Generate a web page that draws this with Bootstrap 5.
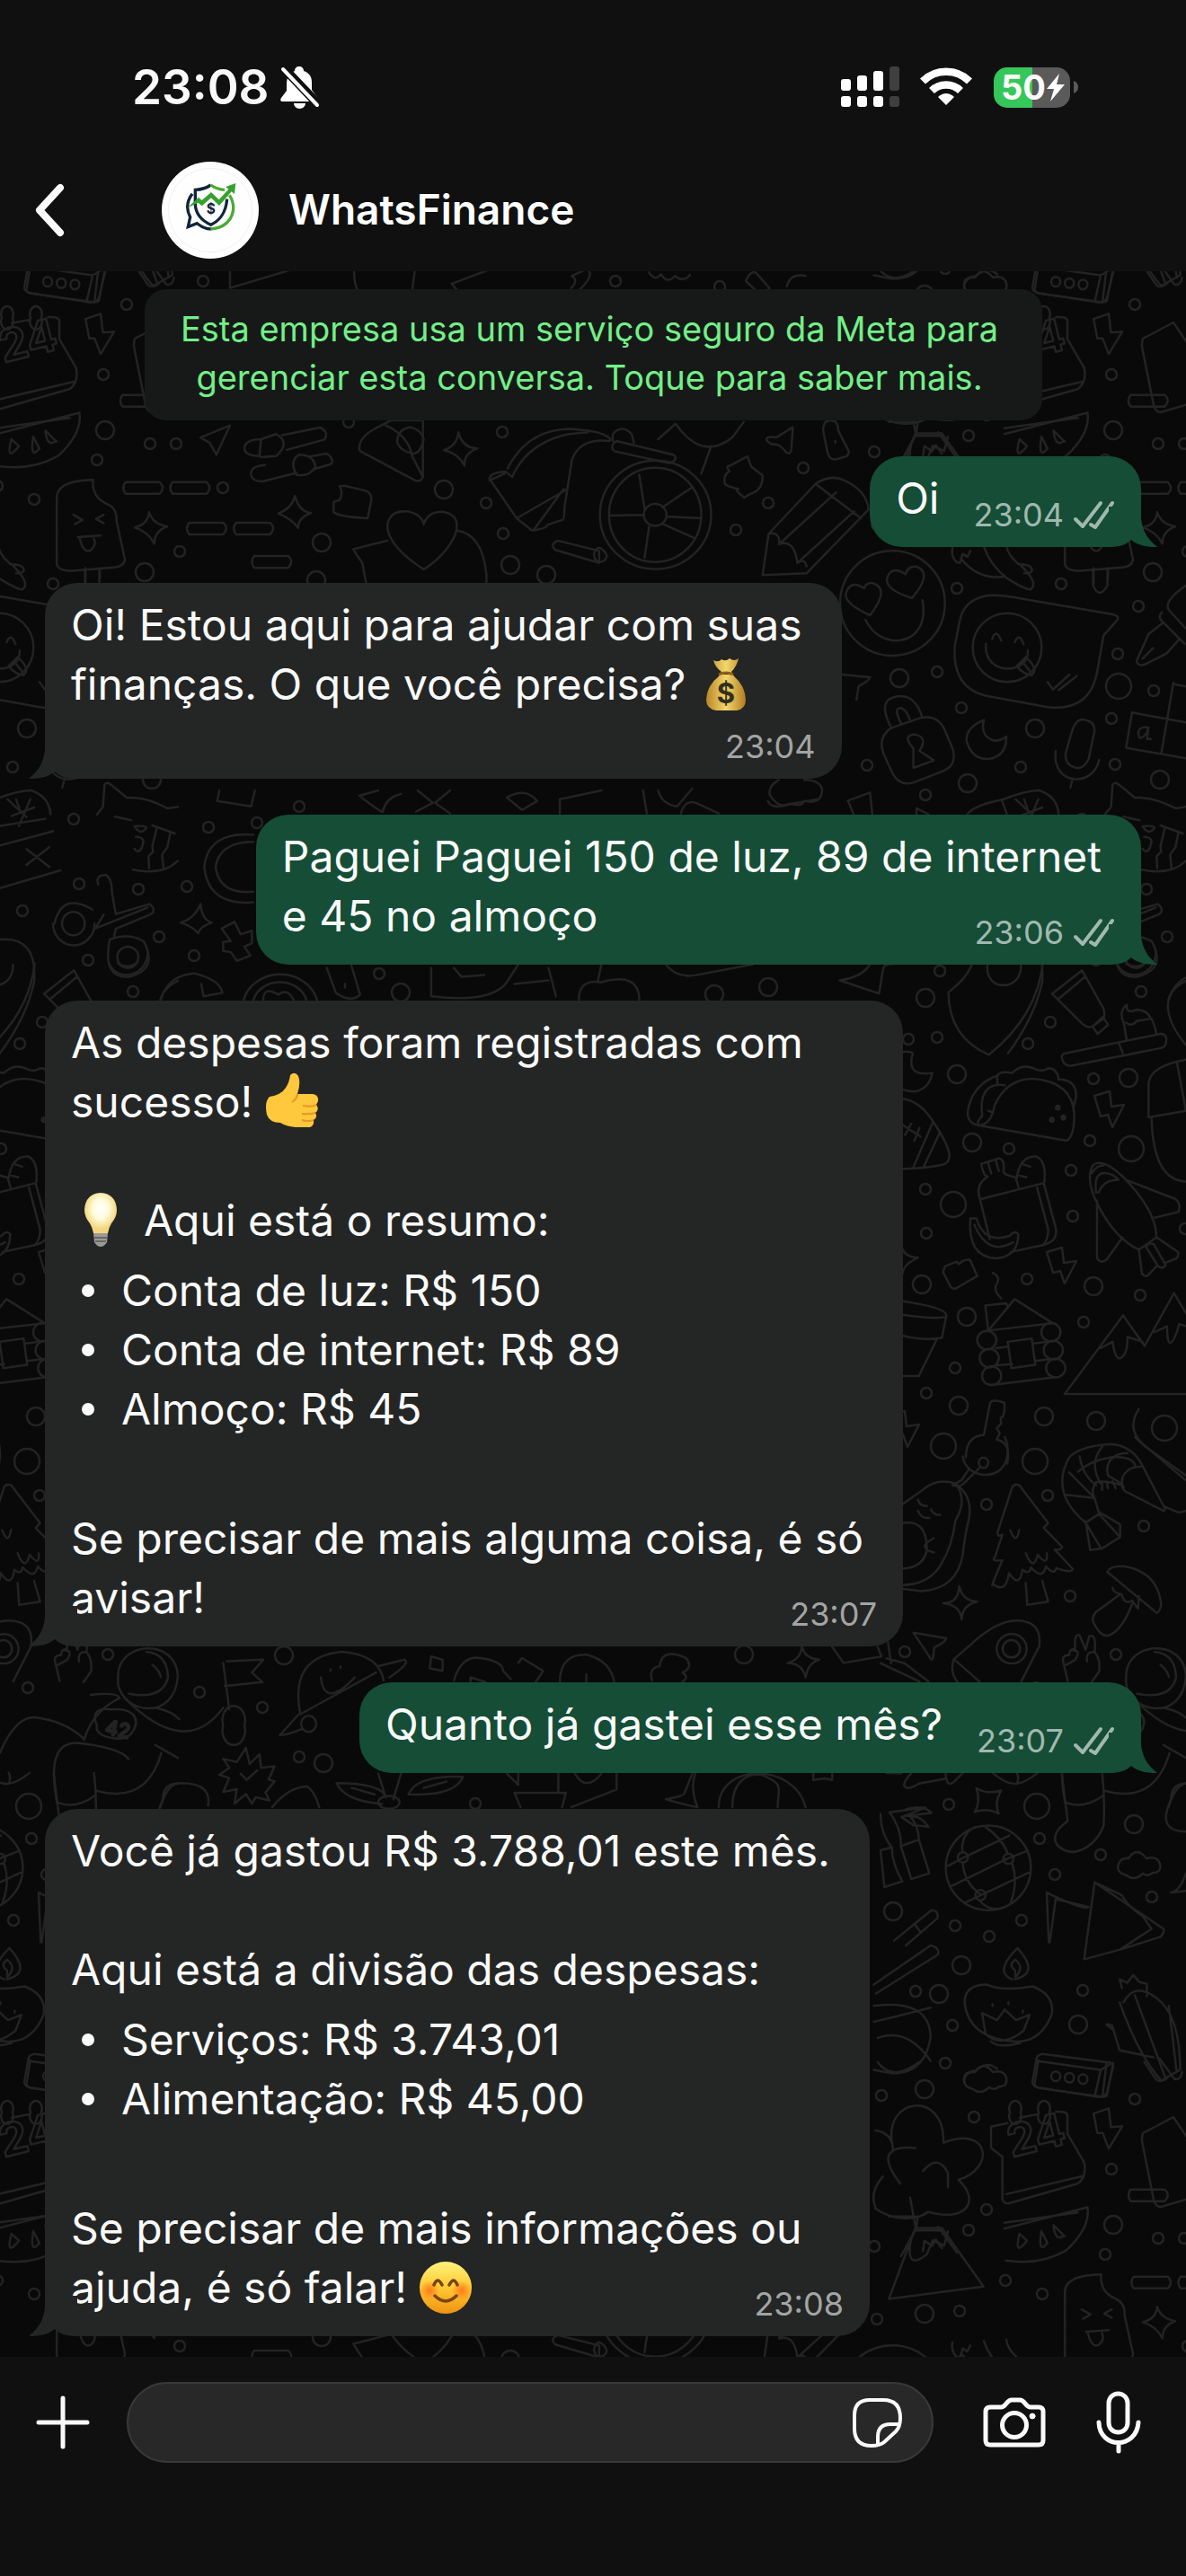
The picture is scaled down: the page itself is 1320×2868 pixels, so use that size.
<!DOCTYPE html>
<html lang="pt-BR" data-bs-theme="dark">
<head>
<meta charset="utf-8">
<meta name="viewport" content="width=device-width, initial-scale=1">
<title>WhatsFinance</title>
<link href="https://cdn.jsdelivr.net/npm/bootstrap@5.3.0/dist/css/bootstrap.min.css" rel="stylesheet">
<style>
:root{--bar:#101010;--wall:#090909;--incoming:#242625;--outgoing:#154d37}
body{font-family:Inter,"Noto Sans",sans-serif;background:var(--bar);color:#fafafa;font-size:48px;line-height:66px}
svg{display:block;flex:none}
.status-row{height:160px;padding:34px 120px 0 147px}
.clock-group{gap:12px}
.clock{font-size:53px;font-weight:600;line-height:60px}
.battery{width:85px;height:45px;border-radius:15px;font-size:38px;font-weight:700;line-height:45px;background:linear-gradient(90deg,#35c759 50%,#5a5a5a 50%);padding-left:8px}
.title-row{height:142px;padding:6px 40px 0 38px}
.avatar{margin-left:106px}
.contact{font-size:46px;font-weight:600;margin-left:33px}
.chat-area{background:var(--wall);padding:20px 50px 23px}
.wallpaper{left:0;top:0;width:100%;height:100%}
.wallpaper *{vector-effect:non-scaling-stroke}
.thread{gap:40px}
.notice{max-width:999px;border-radius:24px;background:#171918;color:#73ef88;font-size:38px;line-height:54px;padding:17px 24px 21px 16px}
.notice a{color:inherit}
.bubble{border-radius:36px;padding:14px 44px 21px 29px}
.bubble.in{background:var(--incoming)}
.bubble.out{background:var(--outgoing)}
.tail{bottom:0;width:54px;height:45px}
.in .tail{left:-18px;fill:var(--incoming)}
.out .tail{right:-18px;fill:var(--outgoing)}
.last-line{gap:38px}
.stamp{font-size:36px;line-height:36px;margin:0 -15px -3px 0;gap:10px;color:#a3a5a4}
.out .stamp{color:#a1b8af}
.stamp-row{height:51px}
.items{list-style:none;margin:12px 0;padding:0}
.items li{display:flex;align-items:center;gap:30px;padding-left:12px}
.items li::before{content:"";width:14px;height:14px;border-radius:50%;background:#fafafa}
.emoji{display:inline-block;vertical-align:-12px}
.emoji-lead{margin:0 29px 0 14px}
.composer{height:244px;padding:28px 50px 0 38px}
.field-wrap{height:90px;border-radius:45px;background:#282828;border:2px solid #393939;padding:0 33px 0 30px;margin:0 55px 0 39px}
.field-wrap input{background:none;border:0;outline:0;color:inherit;min-width:0}
.plain-btn{background:none;border:0;padding:0;color:#fafafa}
.mic-btn{margin-left:56px}
.line-icon{fill:none;stroke:#fafafa;stroke-width:5;stroke-linecap:round;stroke-linejoin:round}
.thin-icon{stroke-width:4}
</style>
<script src="https://cdn.jsdelivr.net/npm/bootstrap@5.3.0/dist/js/bootstrap.bundle.min.js"></script>
</head>
<body>
<header>
  <div class="status-row d-flex align-items-center justify-content-between">
    <div class="clock-group d-flex align-items-center">
      <span class="clock">23:08</span>
      <svg width="44" height="48" viewBox="0 0 44 48"><path fill="#fff" d="M21 1c-3 0-5 2-5 5-6 2-9 8-9 14v8L1 36c-2 3 0 4 2 4h36l3-1c1-2 0-3-2-5l-5-7V19C35 12 32 8 26 6c0-3-2-5-5-5zM15 42h13c0 3-3 6-6.500 6s-6.500-3-6.500-6z"/><path stroke="#101010" stroke-width="10" d="M3 2 42 43"/><path stroke="#fff" stroke-width="4" stroke-linecap="round" d="M3 4 41 44"/></svg>
    </div>
    <div class="d-flex align-items-center">
      <svg width="68" height="46" viewBox="0 0 68 46" fill="#fff"><rect y="14" width="11" height="13" rx="3"/><rect x="18" y="10" width="11" height="17" rx="3"/><rect x="36" y="5" width="11" height="22" rx="3"/><rect x="54" width="11" height="27" rx="3" fill="#3f3f3f"/><rect y="33" width="11" height="12" rx="3"/><rect x="18" y="33" width="11" height="12" rx="3"/><rect x="36" y="33" width="11" height="12" rx="3"/><rect x="54" y="33" width="11" height="12" rx="3" fill="#3f3f3f"/></svg>
      <svg class="ms-3 me-3" width="66" height="46" viewBox="0 0 66 46"><g fill="none" stroke="#fff" stroke-width="8.500"><path d="M7 16.500a37 37 0 0 1 52 0"/><path d="M17 27a23 23 0 0 1 32 0"/></g><path fill="#fff" d="M33 43 24 34q9-8 18 0z"/></svg>
      <div class="battery d-flex align-items-center ms-1"><span>50</span><svg width="22" height="31" viewBox="0 0 22 31"><path fill="#fff" d="M15 0 1 17h8L5 31 21 12h-9z"/></svg></div>
      <svg class="ms-1" width="5" height="14" viewBox="0 0 5 14"><path fill="#5a5a5a" d="M0 0q5 2 5 7t-5 7z"/></svg>
    </div>
  </div>
  <div class="title-row d-flex align-items-center">
    <button class="plain-btn" aria-label="Voltar"><svg width="36" height="60" viewBox="0 0 36 60"><path d="M29 5 6 30l23 25" fill="none" stroke="#fafafa" stroke-width="8" stroke-linecap="round" stroke-linejoin="round"/></svg></button>
    <svg class="avatar" width="108" height="108" viewBox="66 30 324 324"><circle cx="228" cy="192" r="162" fill="#fefefe"/><circle cx="228" cy="192" r="140" fill="none" stroke="#f1f1f1" stroke-width="3"/><g fill="none" stroke-width="10"><path stroke="#10243a" d="M230 108q-22 15-52 16v50c2 30 22 53 52 67 30-15 50-38 54-86"/><path stroke="#4aab35" d="M230 108q20 15 46 16M292 142c26 35 17 105-62 113"/><path stroke="#10243a" d="M168 137q-28 38-7 78l-7 33 30-12q22 18 46 19"/></g><path fill="#35a12f" d="m152 184 37-35 11 10 31-27 26 25 32-35-9-8 33-12-4 36-10-8-41 47-27-26-31 27-12-11z"/><text x="230" y="203" text-anchor="middle" font-size="46" font-weight="700" fill="#10243a">$</text></svg>
    <h1 class="contact mb-0">WhatsFinance</h1>
  </div>
</header>

<main class="chat-area position-relative overflow-hidden">
  <svg class="wallpaper position-absolute" aria-hidden="true">
    <defs>
      <path id="bolt" d="m0 6 17-5 2 17 14-2-13 25-5-14-8 2z"/>
      <path id="cloud" d="M11 28q-13-4-9-13 3-7 11-6 9-14 20 0 12-3 15 6 2 10-8 10-5 5-11 1-10 9-18 2z"/>
      <g id="tile">
        <g id="dots"></g>
        <!-- keyboard, calendar, melon, lolly and rucksack -->
        <g transform="translate(0 290) scale(.842 .3827)">
          <path d="M40 15 35 85q0 9 8 12l80 24q8 2 8-8l8-90M125 118l5-95M180 20l16 52q6 10 14-5M200 10l20 60q8 4 10-20M304 15v65L388 25M469 0q-3 50 3 85M550 0l-5 85M597 68l60-50M597 68l10 25M755 80q10-20 1-35l20-20q12 20-15 70M858 35q8 28 16 5 8 30 18 5 12 20 20-3M986 60q5-30 13-25l18 45q-6 20-12 20zM1040 75q5-40 25-30M1160 20q20 60 55 0M1275 80q-5-30 15-35 15-30 28-5"/>
          <path d="M57 62a6 14 0 1 0 12 0a6 14 0 1 0-12 0M75 66a6 14 0 1 0 12 0a6 14 0 1 0-12 0M93 70a6 14 0 1 0 12 0a6 14 0 1 0-12 0"/>
          <path d="M113 170l20-15 3 55 15-3-18 65-8-45h-7zM-5 505 105 443q4 60-28 125-35 45-80 30M-5 488l97-30M15 520q-8 70 10 20zM44 512q-5 70 8 35zM60 495q18 40 14 30-12 20-14-30"/>
          <path d="M75 690q0-50 48-52-2 50 18 70 14 12 13 50l11 110q0 22-15 25l-55 10q-18 0-20-20zM113 895v45M132 895v30M103 805l30-5M105 805q5 50 15 38 8-15 4-35M97 740l12 15-10 12M137 740l-10 12 10 12"/>
          <path d="M166 645h45q8 15 0 34h-45q-6-17 0-34zM228 645h45q8 15 0 34h-45q-6-17 0-34zM250 763h45q8 15 0 34h-45q-6-17 0-34zM312 763h45q8 15 0 34h-45q-6-17 0-34zM336 860h45q8 15 0 34h-45q-6-17 0-34zM162 391h45q8 15 0 34h-45q-6-17 0-34z"/>
          <path d="M265 515l39-35-18 85-9-35zM345 520q-20 0-22 25 0 24 20 24zM345 520l20-15q20 25 0 64l-20 3M373 508l50-22q12 12 6 35l-50 30M350 595q-20 3-18 30 2 18 15 18l45-25M395 565q20 0 22 35-8 30-25 24-10-40 3-59M410 570l22-8q10 15 6 30l-22 15M475 545q0-30 20-55l22-25h42v165q-3 18-12 8l-68-80q-5-5-4-13zM510 480q30 30 35 90l14 60M525 530q0-40 18-45 15 10 17 35-5 50-17 40-13-5-18-30"/>
          <path d="M606 500q5 45 25 47-18 13-17 50-8-35-27-45 18-15 19-52zM390 685q5 45 21 50-17 13-17 43-8-25-26-42 18-15 22-51zM197 732q5 35 24 42-17 13-17 50-8-35-26-47 18-10 19-45zM455 655l28 15q8 5 8 25l-5 55q-40-5-45-18v-30l8-5q5-20 0-40z"/>
          <path d="M512 770q3-45 28-40 18 10 20 38 5-37 25-37 25 8 17 65-12 60-42 103-48-70-48-129zM512 815l-45 25q5 20 12 40l5 60M603 785q35 10 40 130v25M671 605q25-110 80-115 40 5 50 20 10 12 3 15M677 630q20-100 75-125l25-5M677 630l-8-15q-20 0-22 20l36 115 67-85M647 640l20-20M683 750l20 35q20-5 20-15l20-15q3 0 3-35l10-140q10-65 50-55M705 785l40-120M810 525v-20q12-30 25 0l3 25M815 525l75 40q8 12-5 25l-73-35q-7-15 3-30M737 815l55 30v35l-58-38q-8-15 3-27zM800 850q-10-30-15 5 2 30 12 20 8-10 3-25"/>
          <path d="M805 740a60 135 0 1 0 122 0a60 135 0 1 0-122 0zM793 740a73 157 0 1 0 147 0a73 157 0 1 0-147 0zM851 740a15 32 0 1 0 30 0a15 32 0 1 0-30 0M805 742l45-2M852 722l-7-98M876 718l38-57M882 745l44 5M875 765l43 43M858 775l-6 90M870 520l23-45q35 110 75 40l15-45M940 540l-13 80"/>
          <path d="M988 570l5 30 15 25q0 40-12 50-10 10-12 15-15-25-8-25-20-10-18-20-2-20 6-32-5-15 0-15zM1014 525q-4-15 12-10l22-30-2 65q-2 20-8 5-8-25-18-20zM1088 495q0-30 10-30t10 30l14 60q0 15-8 18l-10 6q-8 0-10-20zM1104 525v5M1008 915l8-120 62-145q20-30 38-10 30 30 32 85l-82 185zM1016 795q15-8 14 30M1030 825q20-15 24 55M1054 880q10-15 12 10M1078 650l60 100M1030 825l75-150M1054 880l75-150M1175 470l38 0-2 35-20 80M1240 500l25 75M1210 510h35M1220 570l2-30 10 15 5-18 8 25"/>
        </g>
        <!-- faces, speech bubble, lock, pen and board -->
        <g transform="translate(860 560) scale(.3333)">
          <path d="M225 335a175 175 0 1 0 350 0a175 175 0 1 0-350 0M325 375q-90-40-80-75 15-45 60-15 10-25 35-15 50 20-15 105zM465 318q-95-30-82-70 15-40 60-10 10-30 38-25 55 20-16 105zM310 390c50 110 220 90 190-65M600 150c-5 30 10 50 25 50l10-30 15 10 10-20M632 190q60 70 145 55M705 145q20 60 75 105 80 50 85 35 20-20-35-75-45-30-50-70M820 205q40 0 45 15t-25 15"/>
          <path d="M705 312q35-10 130 8l300 52q25 5 15 20l-45 50-22 125q-25 130-165 115l-190-35q-130-20-120-170l18-90q15-60 79-75M668 483a115 115 0 1 0 230 0a115 115 0 1 0-230 0M712 470c-10 110 145 105 140 22M733 455q12-40 30 5M808 465q15-35 30 7M815 545l30-30q45 40 20 60-25 0-50-30M833 530l25 30M918 598l18 25 55-50M955 625l60-47M1070 225v50q20 50 48 0v-55"/>
          <path d="M395 750q-40-80 0-98 75-30 105 65M430 740q-30-60 0-55 20 10 30 45M395 752l95-33q60-15 85 40l25 60q20 60-40 80l-85 33q-55 20-80-40l-25-55q-20-55 25-85M470 885v-65q-40-45 5-47 45 10 15 55l48 32zM705 725q-60 25-58 70 20 65 75 60 60-10 58-75-35 25-60 5-25-20-15-60M1000 760q15-45 45-35 30 5 30 35l-20 95q-20 40-50 27-30-10-27-45zM945 828c-15 115 125 125 145 30M1002 920l-8 30M230 573l95 9q0 10-38 30l-7 45"/>
          <path d="M1380 275q-80 55-55 85l55 60M1300 365q-15 15 0 30l75 75M1300 403l-45 35-40 90q5 20 30 10l70-35 40-45M1235 520l35-35M1338 600l-40 235M1200 700l180 33M1200 700l-20 118 200 35M1338 605l42 8M1255 750q-45-5-30 35 20 0 30-35l-5 38h12"/>
          <path d="M1110 1040l20-25 5-75q10-10 20 0l55 45q60-5 135 35l35-5M1170 1048l55 12M1295 1077l75 27M1310 1085l-15 60 2 20-15 15 2 40M1355 1100l-10 50-18 25 5 45M1230 1225q100 20 150-30M1235 1080q60-5 30 15-15 10-30-15M1240 1115q35 0 20 35-10 25-25 5M250 995l75-28 8 75M252 995l18 45M480 1040v-20l40 20M650 1040q20-30 120-50 75-30 120-30 60 20 65 80M765 992l18 50M840 990l15 45M825 1045l75-28M20 925q-35 20-30 50 30 50 70 30 40 10 45-10 60 15 60-40-10-30-60-30"/>
        </g>
        <!-- guitar pick, toothpaste, taco, bag, shuttle, cabin and peaks -->
        <g transform="translate(980 1060) scale(.3333 .3571)">
          <path d="M305 40q-20 45-78 85 0 140 135 195 160-120 180-285M357 40c-10 85 115 85 112 0M573 130l100-73 72 120q5 20 0 30l-37 25q-15 5-30-5zM593 147l90-70M708 232l35-30 17 25-35 28zM790 35c20 55 125 50 130-35M820 35q30 20 60 0M605 325q5-10 15-10l315-60q25 0 18 30-3 12-20 15l-300 55q-25-2-28-30zM797 287l12 28M822 275l-10-55q-18-35 10-55 0 30 30 15 40 0 50 27 10 5 20 50M820 220q20 15 35-5l50-8"/>
          <path d="M325 540q-45-10-30-60 20-70 95-95 10-15 50-8 30-30 70-15 30 15 50 0 30 0 35 35 60 0 58 55l-8 30M325 540q-5-10 15-30-10-60 20-85 20-15 55-10M325 540q45 0 55-60 40-85 130-85 130 10 137 110 0 70-25 83zM390 385v25M360 495l15 5M65 315q25-10 43 0-25 75 65 62-10 50-60 58-30 0-50-12M65 457q60 0 110 70 50 70 55 105 0 25-20 30-80 15-145 13M175 530l-65 140M197 565l-53 105M68 535l65 40M68 520v25M102 535l-20 35M130 548l-17 40"/>
          <path fill="#212121" d="M586 485a6 6 0 1 0 12 0a6 6 0 1 0-12 0M566 523a6 6 0 1 0 12 0a6 6 0 1 0-12 0M605 516a6 6 0 1 0 12 0a6 6 0 1 0-12 0"/>
          <path d="M365 895l-37-140q-5-35 30-55l-10-5q-10-20-12-35l60-17q20 5 15 40-5 10 40 20l10 30M335 770l210-50 40 140q10 45-50 55l-100 20M520 725l40 140q0 35-20 50M455 705q10-70 65-68 35 15 27 80M465 697l22 5M478 662l22 7M358 655l12 35M385 650l10 32M300 830h20q25 80 110 55 20-20 30-5 0 70-75 75-95-5-85-125M313 850q45 100 130 55"/>
          <path d="M727 790q-45-80-18-125 30-25 100 35 115 110 112 190l-58 38q-80-35-136-138zM720 750q-10-70 40-60 20 5 35 20-50 0-67 40M705 690q15-25 40-25M820 710l165 60q20 15 10 40l-88 20M723 775v180q15 20 35 0l50-65M863 928l10 75q15 15 25 0l25-25M923 890l70 45q5 10-5 20l-40 15M887 920l40 60q20 10 25-5l-40-65q-20-5-25 10"/>
          <path d="M215 980l40-15 5 8 15-10q25-10 28 5l20 42-70 38q-15 5-22-10l-22-40zM375 1000q30 15 10 40-5 20 18 40M350 1102l70-7 5 12M350 1102l10 80M360 1180l88-98 127 75zM425 1215l80-10 12 82-80 10zM510 1220l45-5M385 1235l42-5M390 1288l50-3M515 1275l45-5M370 1350l215-25"/>
          <path d="M323 1210a32 29 0 1 0 64 0a32 29 0 1 0-64 0M331 1266a32 29 0 1 0 64 0a32 29 0 1 0-64 0M339 1321a32 29 0 1 0 64 0a32 29 0 1 0-64 0M537 1185a32 29 0 1 0 64 0a32 29 0 1 0-64 0M545 1241a32 29 0 1 0 64 0a32 29 0 1 0-64 0M553 1297a32 29 0 1 0 64 0a32 29 0 1 0-64 0"/>
          <path d="M615 1378l195-245 72 95 98-165 60 95M615 1378h420M735 1235l40-20q10 70 35 45 15-15 15-60l50 15M915 1185l42-18q0 80 25 35 10-20 15-42l40 10M70 1088q150 20 150 45l-15 70q-60 10-135-8M70 1130q100 15 150 8M188 1207l-60 115h-58M70 915q5 35 55 38-50 20-52 52M1020 335q-120 20-125 75v105l125-20M905 515q5 210 130 200M990 345l30 150M1020 90c-90 40-70 120 0 200"/>
          <path d="M345 1505l20-95q3-20 48-5 5 20-5 45-10-5-5 20l-15 15 10 15-10 20q50 10 35 75M345 1505q-60 5-60 70M862 1425q-40 60 10 105l145 115M850 1600q-10-30-80-25-70 10-110 45"/>
        </g>
        <!-- avocado, fir tree, prawn, mushroom, rocket, astronaut and globe -->
        <g transform="translate(980 1600) scale(.3333 .3571)">
          <path d="M275 60c5 70 150 90 150-20q0-20-10-40M328 80a16 16 0 1 0 32 0a16 16 0 1 0-32 0M335 92l-60 55q-10 10-35 3l30-15 25-35M65 215l75-50q50-40 110-20 60 40 45 110-15 60-20 110-20 110-140 115l-70-8M255 150q35 50-5 110-10 80-50 140-40 60-130 62M65 270q90-20 90 80-10 60-90 60M125 195q5 20 30 20M125 230q10 25 38 22M168 225q10 20 32 17M178 315q-60 30 0 45"/>
          <path d="M455 148q10 0 15 10l90 110-15 15 62 60q-5 10-25 8l60 60q-5 15-55-3-5 25-35-5-10 45-50 3-5 25-28 8-10 60-45 10-10 65-52 35-15 20 30-75-40 5-25-10l25-70q-20 10-15-10l45-130q3-15 18-16M433 290q20 50 30 0M485 362q25 60 40 5 35 40 30-5M485 455l5 68 70-10-20-65"/>
          <path d="M715 190q-15-20 5-50 35-5 85 10 5 20 25 25l115 55q10-5 0-15l-70-125q-35-65-110-68-130 10-145 60-45 100 65 185l45-28zM685 262l15 90 40-5 60-35v-40l-70-38M730 240l68 70M690 275l45 70M665 60q10 60 55 90M630 110l85 80M620 180l92 10M740 30q-45 50-5 115M825 50c-60 0-75 40-65 70l45 25M872 92c-60 0-75 40-60 65M850 0l35 30 135 90M945 215l50 20 25-5M740 140v25M755 140l5 20M775 138l10 22"/>
          <path d="M757 420q10-20 60-17 110 20 120 120-5 25-15 25zM800 490l-80 55q-20 20-5 40 25 45 55 30 40-20 70-95M775 470q0 15 30 20 10 35 35 20l20 25 3-40M210 518q50 0 53-53 10 45 60 48-50 10-52 55-5-45-61-50M110 610l110 17q-5 15-40 28l-5 35q-5 10-15-10zM330 762l-85-70 50-40q90-80 160-80 85 0 75 80l-60 110M245 692q-15 40 12 72M388 660a50 46 0 1 0 100 0a50 46 0 1 0-100 0M408 660a29 27 0 1 0 58 0a29 27 0 1 0-58 0M0 705l130 57M35 705l-10-65M20 690l60 15 80 57"/>
          <path d="M625 760l-15-60q-5-20 20-20 0-20 20-20-5-50 15-42l20 45 12-42q25-10 18 50 20 20 15 60l-25 33M645 665q25 0 5 30l-30 15M690 700q-5-30 20-30M820 745c0-110 195-120 200 0-10 140-180 120-200 25zM915 670q70 5 72 80-20 70-130 50M935 710q25 20 28 38M875 870l5 20-5 20M950 845q50 10 75 35M945 960l75 40M965 985q-50 160-215 118M20 1048h50M78 1085q5-20 25-37M78 1085q10 20 50-5l90-15v-18M220 1065q5 25 25 10l30-28M375 1047c60 50 95 40 150 0M455 1047q8 10 2 30"/>
          <path d="M605 1047l20 150q-60 40-35 75 50 45 115-5 25-20 40-55 5-90-5-165M615 1138q60 25 128-20M320 1095q40 20 83 7-25 40-8 72-40-20-80-5 20-35 5-74zM30 1170l120-15-80 30 40 25M30 1170q40 50 38 105l35 103 60-18-35-105q0-40-30-75M68 1275l60-20M85 1160q60-15 85 12-50 5-85 10M100 1185q30-10 60 30l-50-5M0 1175q0 60 38 105 0 50 35 105l-60 18-13-115 35-8"/>
          <path d="M218 1343a142 132 0 1 0 284 0a142 132 0 1 0-284 0M225 1337l50-25 155-70M237 1400l185-85 68-25M285 1450l210-92M275 1295c-10-40 20-75 45-80M275 1330q5 60 58 95M350 1215q60 40 75 85M440 1330q20 60-5 120M330 1445q30 30 60 25M258 1310a17 16 0 1 0 34 0a17 16 0 1 0-34 0M410 1315a17 16 0 1 0 34 0a17 16 0 1 0-34 0M317 1428a17 16 0 1 0 34 0a17 16 0 1 0-34 0"/>
          <path d="M555 1420q120 55 140 45l-110-25-20 135M555 1425l7 150M715 1388l-35 240 120-30 105-65-30-40q-45-25-70-65zM715 1388l230 145q5 10-10 25l-135 40M1020 1080q-50 0-50 50-50 100 50 100M970 1420q30-5 50-60M970 1420l50-5M45 1570l125-95q25 0 20 25l-105 85M115 1520l20 25"/>
        </g>
        <!-- scissors, tennis ball, sparkle and fruit -->
        <g transform="translate(0 880) scale(.842 .3954)">
          <path d="M0 100l60-20M10 25l25 50M40 25l-15 75M35 165l30 50M65 160l-30 50M0 155l70-40M0 275l80-50M130 265q-5-25 10-27 8 10 8 50l5 60 45-28q10 20 0 30l-45 40-2 20M137 350l-10 35M70 375a27 60 0 1 0 55 0M82 375a15 33 0 1 0 30 0a15 33 0 1 0-30 0M72 375q10-90 50-40M125 390l70-60M145 420q-10 110 25 105 40-20 20-100-20-25-45-5M155 470a14 30 0 1 0 28 0a14 30 0 1 0-28 0M265 320q2 45 15 52-15 10-18 30-8-20-23-30 18-10 26-52M310 370l8 35 15-10v35l-10 10 8 25-18 15-8-25-10-3v-25l10-3-12-35zM335 125q-60-10-65 90 5 110 65 100M335 145q-45 0-50 70 5 80 50 70M0 420q50-10 45 120-10 100-45 200"/>
          <path d="M212 590q10-70 45-75 35 20 37 55l-25 10-3-35M322 590a50 95 0 0 1 97 0M335 590a36 65 0 0 1 70 0M348 590q0-40 20-15 12-20 20 15M432 500l12 70q20 30 32 5l-12-85M456 545v10M570 500v80q80 20 100-40l15-50M600 500l10 25 30-5M680 545l45-10M725 500l10 80M765 590q0-60 30-50 50-30 50 50M790 540l5-50M880 490q15 40 40 30l75-30M1110 535q30-10 40-45M1110 535l52 37 5-65q0-20 15-18"/>
          <path d="M290 0l-3 30 45 15 5-45M475 15l25-15M478 20q28 45 28 40 4-40 24-50M552 0l20 35-22 25M595 0l-20 35 20 30M670 20q25-30 40 10l-20 25zM740 25l55-25M740 25v40M850 0l5 65M870 0q5 40 25 45l20-50M900 65q5-40 20-30l30 30M1015 30q5 25 25 10l40-15"/>
        </g>
        <!-- moonwalk arm, flag, planet, bouquet -->
        <g transform="translate(0 1480) scale(.842 .3571)">
          <path d="M120 1140q35-10 38 10-35 40-47 130M300 1035l48-5-15 40 14 30-50 12M295 1040l8 145M165 1150q80 190 130 30M295 1235a15 45 0 1 1 28 0a15 45 0 1 1-28 0M397 1200q-15-180 55-195 50 10 55 90M397 1200l100-130M395 1200l-25 65q10 0 30-20M398 1230a10 25 0 1 0 20 0a10 25 0 1 0-20 0M424 1085q5 100 45 0M437 1060v5M450 1050v5M500 1050l35-20q8 10-20 55M570 1020l15 10v35l-17-8zM600 1095q10-80 35-70 30 10 30 40l10 25M622 1100v-15l20 15M685 1040l5-15 28 40-10 35M740 1100q0-90 37-85 30 20 35 85M775 1100v-25M862 1095q-5-40 10-45 3-60 35-25 10 30-5 45 10 15 0 28M1060 985q2 40 23 45-15 10-18 55-5-45-24-45 18-10 19-55M1100 990l15 50 50-20-5-30"/>
          <path d="M0 1320q20-110 45-110 40 10 65 65M128 1235q-10-60 20-50 30-5 32 40-5 60-30 50-25-10-22-40M75 1470q-15-190 30-180 55 15 65 50M325 1305l5 50 13-30 2 42 18-5-8 42 8 5-12 35 5 25-18-10-5 20-8-30-15 30 3-45-18 8 8-43-13-10 13-22-8-28 18 10zM318 1385l8 20 14-30M212 1490q10-80 28-75 40 0 35 70M360 1490q20-60 45-65 10 10 17 65M505 1480q-50-10-60-65 60 0 65 45l-10-75M520 1465l10-80M540 1450q10-60 72-55-10 60-72 55M500 1475a14 20 0 1 0 28 0a14 20 0 1 0-28 0M465 1430l30 20M560 1430l30-20M680 1445h68l-5 45M680 1445l8 45M670 1385l15 35v-35M738 1385v55M815 1385v50l-60 55M760 1385q15 60 35 0M915 1385l-10 60q0 10-25 20 20 15 42 25-10-60-3-105M950 1490c0-140 100-140 115 0M968 1490c0-80 20-110 40-100 30 30 20 40 20 100M1075 1385v20l15-5 10 5v-20"/>
        </g>
        <!-- lantern, cactus, palm and volcano -->
        <g transform="translate(0 2000) scale(.842 .3954)">
          <path d="M1155 530l75-110q12 5 10 25l-82 110M1155 590q75-20 75 90-8 100-50 100l-25-10M1155 635q20-10 75-40M1160 680q40-30 70 65M1275 580q0-50 30-50 20 20 60 5 30 25 25 80-15 80-50 75-60-10-65-110M1338 515q-25-20 7-88 30 70-3 88v-25q-10-15 0-30 12 20 2 45M1298 610l5 60q20 40 50-10l8-45-18 15-15-30-10 30zM1310 690q10 20 38 5M1312 585v5M1333 580v5M1352 603v5M1485 580q15-60 45-10 30 50 30 200l-25 30q-30-70-55-220M1500 560l40 230M1545 590l10 180M1470 655q-15-20 0-10l10 70 45 20M1483 540l-3-25 10 10 8-22 8 20 10 5v35"/>
          <path d="M1378 725l90 25q5 5 3 15l-8 70q-5 15-15 10l-75-25q-10-5-8-20l5-60q0-10 8-15M1370 745l85 25 12-15M1455 770l-8 75M1180 985c-15-140 70-160 67-10 60-50 70 70 20 105 30 60 10 120-40 90-20 30-50 20-70-10M1157 940q25 10 23 60M1210 990q-60-10-20 100M1220 1055q20-50 33 5v40M1157 1155q-8-40 10-85M1203 1130l7 80M1210 1215h35M1245 1215l55 165-125 35 35-200M1205 1240q-10 100 20 50l8-40 15 15 5-40M1310 930l0 60 15 25v120q3 15 10 10l90-55q12-20 8-60l-22-80v-50q0-15-15-12M1310 930l22-10M1348 905l24-10M1335 890a8 22 0 1 0 14 0a8 22 0 1 0-14 0M1373 890a8 22 0 1 0 14 0a8 22 0 1 0-14 0M1330 1120l100-50"/>
        </g>
        <use href="#bolt" x="1218" y="1214"/><use href="#bolt" x="1165" y="1388"/><use href="#bolt" x="990" y="1570"/>
        <use href="#cloud" x="1243" y="2060"/><use href="#cloud" x="1072" y="2298"/>
        <path d="M1272 2375l34-18 40 60-20 30-34 10q-6 0-8-8l-12-60q-2-8 0-14"/>
        <text x="1126" y="2402" font-size="50" font-weight="700" transform="rotate(-14 1126 2402)">24</text>
        <text x="116" y="1930" font-size="22" transform="rotate(12 116 1930)">42</text>
      </g>
    </defs>
    <g fill="none" stroke="#232323" stroke-width="2.500" stroke-linecap="round" stroke-linejoin="round" transform="translate(0 -302)">
      <use href="#tile"/><use href="#tile" x="-1122"/><use href="#tile" x="1122"/>
      <use href="#tile" y="-1998"/><use href="#tile" x="-1122" y="-1998"/>
      <use href="#tile" y="1998"/><use href="#tile" x="1122" y="1998"/>
    </g>
  </svg>

  <div class="thread position-relative d-flex flex-column">
    <div class="notice align-self-center text-center w-100"><a href="#" class="text-decoration-none">Esta empresa usa um serviço seguro da Meta para<br>gerenciar esta conversa. Toque para saber mais.</a></div>

    <div class="bubble out position-relative align-self-end">
      <svg class="tail position-absolute" viewBox="0 0 54 45"><path d="M35 0C36 25 40 33 54 45 41 45 32 43 25 37 19 43 11 45 0 45V0z"/></svg>
      <div class="last-line d-flex justify-content-between align-items-end"><span>Oi</span><span class="stamp d-flex align-items-center">23:04<svg width="47" height="33" viewBox="0 0 47 33"><path d="m3 21 8 8L31 3M20 27l5 3L44 3" fill="none" stroke="#a1b8af" stroke-width="4" stroke-linecap="round" stroke-linejoin="round"/></svg></span></div>
    </div>

    <div class="bubble in position-relative align-self-start">
      <svg class="tail position-absolute" viewBox="0 0 54 45"><path d="M19 0C18 25 14 33 0 45 13 45 22 43 29 37 35 43 43 45 54 45V0z"/></svg>
      <div>Oi! Estou aqui para ajudar com suas<br>finanças. O que você precisa? <svg class="emoji ms-2" width="46" height="59" viewBox="0 0 46 59"><defs><linearGradient id="gold"><stop stop-color="#b9862a"/><stop offset=".5" stop-color="#f3d76b"/><stop offset="1" stop-color="#b27b20"/></linearGradient></defs><path fill="url(#gold)" d="M9 3q6 3 9-1 5 3 9-1 5 4 10 0-2 9-8 15l3 5q12 10 13 26 0 10-10 12H12Q1 57 1 47q1-16 14-26l3-5Q11 11 9 3z"/><path stroke="#8f601b" stroke-width="3" d="M15 19q8-4 16 0"/><text x="23" y="51" text-anchor="middle" font-size="31" font-weight="700" fill="#33301f">$</text></svg></div>
      <div class="stamp-row d-flex justify-content-end align-items-end"><span class="stamp">23:04</span></div>
    </div>

    <div class="bubble out position-relative align-self-end">
      <svg class="tail position-absolute" viewBox="0 0 54 45"><path d="M35 0C36 25 40 33 54 45 41 45 32 43 25 37 19 43 11 45 0 45V0z"/></svg>
      <div>Paguei Paguei 150 de luz, 89 de internet</div>
      <div class="last-line d-flex justify-content-between align-items-end"><span>e 45 no almoço</span><span class="stamp d-flex align-items-center">23:06<svg width="47" height="33" viewBox="0 0 47 33"><path d="m3 21 8 8L31 3M20 27l5 3L44 3" fill="none" stroke="#a1b8af" stroke-width="4" stroke-linecap="round" stroke-linejoin="round"/></svg></span></div>
    </div>

    <div class="bubble in position-relative align-self-start">
      <svg class="tail position-absolute" viewBox="0 0 54 45"><path d="M19 0C18 25 14 33 0 45 13 45 22 43 29 37 35 43 43 45 54 45V0z"/></svg>
      <div>As despesas foram registradas com<br>sucesso! <svg class="emoji" width="60" height="62" viewBox="0 0 60 62"><path fill="#ffc83d" d="M28 3q5-5 9 1 3 8-1 20h17q7 1 6 8l-2 4q4 5-1 9 3 5-2 8 1 6-4 8H34q-11-1-17-5-12 0-15-9-3-14 3-20 13-2 18-10 4-6 5-14z"/><path fill="none" stroke="#e9961f" stroke-width="2" d="M57 36q-5 3-15 1M56 45q-6 2-15 1M54 53q-5 2-13 0M36 24q0 5-6 9"/></svg><br><br><svg class="emoji emoji-lead" width="38" height="60" viewBox="0 0 38 60"><defs><radialGradient id="glow" cy=".4"><stop stop-color="#fff"/><stop offset=".5" stop-color="#fffbd9"/><stop offset="1" stop-color="#f2d77c"/></radialGradient></defs><path fill="url(#glow)" d="M19 0q17 1 18 19 0 8-6 15-3 5-4 11H11q-1-6-4-11Q1 27 1 19 2 1 19 0z"/><path fill="#9b9b96" d="M11 45h16l-1 10q-3 5-7 5t-7-5z"/><path stroke="#686865" stroke-width="2" d="M12 50h14M13 54h12"/></svg>Aqui está o resumo:</div>
      <ul class="items"><li>Conta de luz: R$ 150</li><li>Conta de internet: R$ 89</li><li>Almoço: R$ 45</li></ul>
      <div><br>Se precisar de mais alguma coisa, é só</div>
      <div class="last-line d-flex justify-content-between align-items-end"><span>avisar!</span><span class="stamp">23:07</span></div>
    </div>

    <div class="bubble out position-relative align-self-end">
      <svg class="tail position-absolute" viewBox="0 0 54 45"><path d="M35 0C36 25 40 33 54 45 41 45 32 43 25 37 19 43 11 45 0 45V0z"/></svg>
      <div class="last-line d-flex justify-content-between align-items-end"><span>Quanto já gastei esse mês?</span><span class="stamp d-flex align-items-center">23:07<svg width="47" height="33" viewBox="0 0 47 33"><path d="m3 21 8 8L31 3M20 27l5 3L44 3" fill="none" stroke="#a1b8af" stroke-width="4" stroke-linecap="round" stroke-linejoin="round"/></svg></span></div>
    </div>

    <div class="bubble in position-relative align-self-start">
      <svg class="tail position-absolute" viewBox="0 0 54 45"><path d="M19 0C18 25 14 33 0 45 13 45 22 43 29 37 35 43 43 45 54 45V0z"/></svg>
      <div>Você já gastou R$ 3.788,01 este mês.<br><br>Aqui está a divisão das despesas:</div>
      <ul class="items"><li>Serviços: R$ 3.743,01</li><li>Alimentação: R$ 45,00</li></ul>
      <div><br>Se precisar de mais informações ou</div>
      <div class="last-line d-flex justify-content-between align-items-end"><span>ajuda, é só falar! <svg class="emoji" width="58" height="58" viewBox="0 0 58 58"><defs><linearGradient id="sun" x2="0" y2="1"><stop stop-color="#fff27a"/><stop offset=".5" stop-color="#ffc933"/><stop offset="1" stop-color="#ee9211"/></linearGradient><radialGradient id="blush"><stop stop-color="#ff7a1c"/><stop offset="1" stop-color="#ff7a1c" stop-opacity="0"/></radialGradient></defs><circle cx="29" cy="29" r="29" fill="url(#sun)"/><circle cx="11" cy="32" r="11" fill="url(#blush)"/><circle cx="47" cy="32" r="11" fill="url(#blush)"/><path fill="none" stroke="#7a4410" stroke-width="3.500" stroke-linecap="round" d="M16 26q4-10 9 0M33 26q5-10 9 0M17 38q12 12 24 0"/></svg></span><span class="stamp">23:08</span></div>
    </div>
  </div>
</main>

<footer class="composer d-flex align-items-start">
  <div class="d-flex align-items-center w-100">
    <button class="plain-btn" aria-label="Anexar"><svg width="64" height="64" viewBox="0 0 64 64" class="line-icon"><path d="M32 5v54M5 32h54"/></svg></button>
    <div class="field-wrap d-flex align-items-center flex-grow-1">
      <input class="flex-grow-1" type="text" aria-label="Mensagem">
      <button class="plain-btn" aria-label="Figurinhas"><svg width="56" height="56" viewBox="0 0 56 56" class="line-icon thin-icon"><path d="M20 3h15q19 0 19 20 0 10-5 15L36 50q-5 4-14 4Q3 54 3 35V20Q3 3 20 3zM53 30H43q-14 0-14 14v8"/></svg></button>
    </div>
    <button class="plain-btn" aria-label="Câmera"><svg width="70" height="56" viewBox="0 0 70 56" class="line-icon"><path d="M8 11h12q3 0 6-4 3-4 6-4h9q3 0 6 4 3 4 6 4h9q5 0 5 5v32q0 5-5 5H8q-5 0-5-5V16q0-5 5-5z"/><circle cx="35" cy="31" r="13.500"/><circle cx="55" cy="21" r="3" fill="#fafafa" stroke-width="1"/></svg></button>
    <button class="plain-btn mic-btn" aria-label="Gravar áudio"><svg width="50" height="70" viewBox="0 0 50 70" class="line-icon"><rect x="14" y="3" width="21" height="43" rx="10.500"/><path d="M3 35c1 30 42 30 44 0M25 58v9"/></svg></button>
  </div>
</footer>
<script>
// Round dots between the doodles, as x, y pairs for each size.
const dots = {
  s: [1065,655,1181,650,1267,675,1244,728,1284,769,1043,748,1070,788,1237,800,965,852,1136,854,1030,885,1241,851,1276,990,1299,1043,1046,1081,1011,1157,1043,1155,1169,1138,1144,1162,1270,1104,1217,1201,1123,1279,1213,1270,1030,1324,1192,1303,1194,1354,1031,1373,1143,1424,1269,1442,1206,1472,1063,1523,1031,1551,1319,1368,1098,1675,1166,1665,1273,1699,1191,1777,1242,1842,1007,1839,1056,2009,1157,2047,1225,2065,1174,2087,1282,2112,1063,2144,1137,2138,1101,2156,1019,2217,1205,2216,1060,2255,1052,2297,981,2333,1084,2357,1098,2460,1119,2539,1160,2554,1068,2573,976,2582,226,313,685,313,801,319,141,339,115,417,167,494,196,494,108,512,388,470,559,481,541,560,200,614,560,594,819,590,894,521,855,560,973,503,1078,485,248,543,82,912,232,921,88,984,208,987,25,1014,98,1069,216,1064,422,1084,333,898,286,916,222,1884,292,1901,333,1956,31,1879,529,2008],
  m: [1283,637,1001,755,1152,811,1077,872,1291,868,1030,1111,1065,1196,1256,1200,1082,1272,1026,1430,1217,1432,1076,1466,1067,1565,1162,1577,1220,1582,1262,2031,994,2128,1070,2188,1045,2220,1200,2254,1029,2326,1029,2576,117,479,494,545,358,604,568,629,608,640,352,646,446,1105,855,1099,795,1107,316,1843,360,1963,828,1842],
  l: [1245,764,1259,1279,1061,1341,1296,1590,1050,1610,1152,1627,1154,2011]
};
const host = document.getElementById('dots'), radius = {s: 6, m: 10, l: 14};
for (const size in dots) for (let i = 0; i < dots[size].length; i += 2) {
  const c = document.createElementNS('http://www.w3.org/2000/svg', 'circle');
  c.setAttribute('cx', dots[size][i]); c.setAttribute('cy', dots[size][i + 1]); c.setAttribute('r', radius[size]);
  host.appendChild(c);
}
</script>
</body>
</html>
